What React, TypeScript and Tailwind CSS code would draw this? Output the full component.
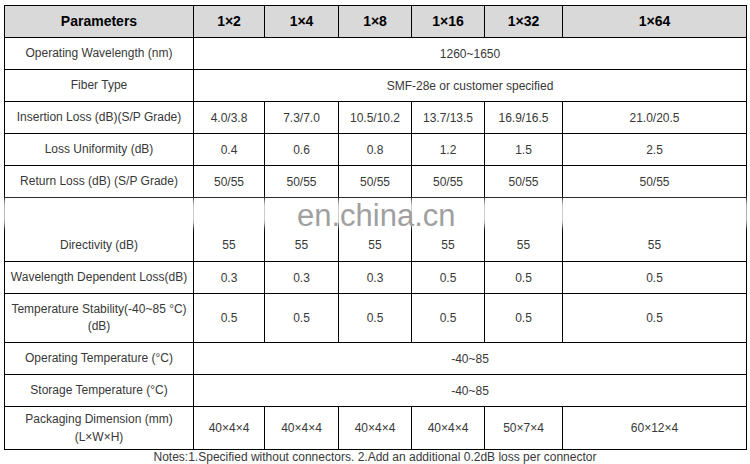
const cols = [189, 71, 74, 73, 73, 78, 184];

type Row = { label: React.ReactNode; values: string[] | string; h: number; bottom?: boolean };

const rows: Row[] = [
  { label: "Operating Wavelength (nm)", values: "1260~1650", h: 32 },
  { label: "Fiber Type", values: "SMF-28e or customer specified", h: 32 },
  {
    label: "Insertion Loss (dB)(S/P Grade)",
    values: ["4.0/3.8", "7.3/7.0", "10.5/10.2", "13.7/13.5", "16.9/16.5", "21.0/20.5"],
    h: 32,
  },
  { label: "Loss Uniformity (dB)", values: ["0.4", "0.6", "0.8", "1.2", "1.5", "2.5"], h: 32 },
  {
    label: "Return Loss (dB) (S/P Grade)",
    values: ["50/55", "50/55", "50/55", "50/55", "50/55", "50/55"],
    h: 32,
  },
  { label: "Directivity (dB)", values: ["55", "55", "55", "55", "55", "55"], h: 64, bottom: true },
  {
    label: "Wavelength Dependent Loss(dB)",
    values: ["0.3", "0.3", "0.3", "0.5", "0.5", "0.5"],
    h: 32,
  },
  {
    label: (
      <>
        Temperature Stability(-40~85 °C)
        <br />
        (dB)
      </>
    ),
    values: ["0.5", "0.5", "0.5", "0.5", "0.5", "0.5"],
    h: 49,
  },
  { label: "Operating Temperature (°C)", values: "-40~85", h: 32 },
  { label: "Storage Temperature (°C)", values: "-40~85", h: 32 },
  {
    label: (
      <span className="leading-[18px]">
        Packaging Dimension (mm)
        <br />
        (L×W×H)
      </span>
    ),
    values: ["40×4×4", "40×4×4", "40×4×4", "40×4×4", "50×7×4", "60×12×4"],
    h: 43,
  },
];

const headers = ["Parameters", "1×2", "1×4", "1×8", "1×16", "1×32", "1×64"];

export default function App() {
  return (
    <div
      className="relative w-[750px] h-[464px] bg-white overflow-hidden text-[12px] text-[#383838]"
      style={{ fontFamily: '"Liberation Sans", Arial, sans-serif' }}
    >
      <div className="pt-[5px] pl-[4px]">
        <table className="border-collapse table-fixed w-[743px]">
          <colgroup>
            {cols.map((w, i) => (
              <col key={i} style={{ width: w }} />
            ))}
          </colgroup>
          <thead>
            <tr className="h-[32px]">
              {headers.map((h) => (
                <th
                  key={h}
                  className="border border-black bg-[#d9d9d9] p-0 text-center text-[14px] font-bold text-black"
                >
                  {h}
                </th>
              ))}
            </tr>
          </thead>
          <tbody>
            {rows.map((r, i) => (
              <tr key={i} style={{ height: r.h }}>
                <td
                  className={`border border-black p-0 text-center leading-[17px] ${
                    r.bottom ? "align-bottom pb-[7px]" : "align-middle"
                  }`}
                >
                  {r.label}
                </td>
                {typeof r.values === "string" ? (
                  <td colSpan={6} className="border border-black p-0 text-center align-middle">
                    {r.values}
                  </td>
                ) : (
                  r.values.map((v, j) => (
                    <td
                      key={j}
                      className={`border border-black p-0 text-center ${
                        r.bottom ? "align-bottom pb-[7px]" : "align-middle"
                      }`}
                    >
                      {v}
                    </td>
                  ))
                )}
              </tr>
            ))}
          </tbody>
        </table>
      </div>
      <p className="text-center leading-[14px]">
        Notes:1.Specified without connectors. 2.Add an additional 0.2dB loss per connector
      </p>

      {/* watermark */}
      <div className="absolute left-0 top-[200px] h-[26px] w-[750px] bg-white/80 blur-[3px]" />
      <div className="absolute left-[297px] top-[197px] text-[31px] leading-[37px] text-[#a0a0a0]">
        en.china.cn
      </div>
    </div>
  );
}
